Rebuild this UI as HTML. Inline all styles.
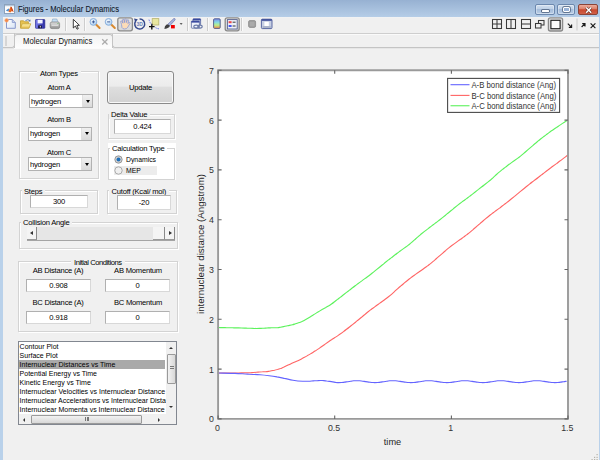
<!DOCTYPE html>
<html><head><meta charset="utf-8">
<style>
*{margin:0;padding:0;box-sizing:border-box}
html,body{width:600px;height:460px;overflow:hidden;background:#f0f0f0;font-family:"Liberation Sans",sans-serif;color:#000}
.a{position:absolute}
.t{position:absolute;white-space:nowrap;line-height:1}
#title{left:0;top:0;width:600px;height:17px;background:linear-gradient(#97b1d2,#b5cde7)}
#lb{left:0;top:17px;width:3px;height:443px;background:#b9d1ea}
#rb{left:599px;top:17px;width:1px;height:443px;background:#b9d1ea}
#tbar{left:3px;top:17px;width:596px;height:16px;background:#f0f0f0;border-top:1px solid #f1f2f3}
#tline{left:3px;top:33px;width:596px;height:1px;background:#cecece}
.sep{position:absolute;top:18px;width:1px;height:13px;background:#cdcdcd;box-shadow:1px 0 0 #fafafa}
.pnl{position:absolute;border:1px solid #d3d3d3;box-shadow:inset 1px 1px 0 #fff,1px 1px 0 #fff}
.ptl{position:absolute;background:#f0f0f0;padding:0 2.5px;font-size:7.6px;letter-spacing:-0.22px;line-height:8px;white-space:nowrap}
.lbl{position:absolute;font-size:7.6px;letter-spacing:-0.22px;line-height:8px;white-space:nowrap;text-align:center}
.edit{position:absolute;background:#fff;border:1px solid #b0b0b0;border-right-color:#d8d8d8;border-bottom-color:#d8d8d8;font-size:7.6px;letter-spacing:-0.15px;text-align:center;display:flex;align-items:center;justify-content:center}
.pop{position:absolute;background:#fff;border:1px solid #b2b2b2;font-size:7.6px;letter-spacing:-0.22px;padding-left:1px;display:flex;align-items:center}
.pop .btn{position:absolute;right:0;top:0;width:10px;height:100%;background:linear-gradient(#f0f0f0,#dadada);border-left:1px solid #e0e0e0}
.pop .btn:after{content:"";position:absolute;left:2.5px;top:4.5px;border-left:2.5px solid transparent;border-right:2.5px solid transparent;border-top:3px solid #000}
.li{position:absolute;left:0;height:9px;font-size:7px;line-height:9px;white-space:nowrap;padding-left:0.6px;width:147px;overflow:hidden}
</style></head><body>
<div class="a" id="title"></div>
<div class="a" id="lb"></div>
<div class="a" id="rb"></div>
<div class="a" id="tbar"></div>
<div class="a" id="tline"></div>

<!-- title -->
<svg class="a" style="left:4px;top:4px" width="11" height="10">
<rect x="0.5" y="0.5" width="10" height="9" fill="#fdfdfd" stroke="#8ca2bc"/>
<rect x="1" y="1" width="9" height="1.2" fill="#b4c6da"/>
<path d="M1.8,6.6 L4.6,4.6 L5.6,5.6 L4.2,7.6 Z" fill="#4a8ed0"/>
<path d="M4.4,7.6 L6.6,2.8 Q7.4,2.4 7.8,3.4 L9.6,7.8 L8,7 L6.2,8.6 Z" fill="#e86a22"/>
<path d="M6.6,2.8 Q7.4,2.4 7.8,3.4 L9.6,7.8 L8,7 Z" fill="#c8401a"/>
</svg>
<div class="t" style="left:17.5px;top:4.9px;font-size:8.8px;color:#101828;transform:scaleX(0.868);transform-origin:0 0;-webkit-text-stroke:0.08px #101828">Figures - Molecular Dynamics</div>
<!-- window buttons -->
<div class="a" style="left:535px;top:4px;width:20px;height:11px;border:1px solid #6c88ae;border-radius:2px;background:linear-gradient(#d2e0f0 0%,#bed0e6 45%,#a6bedc 50%,#b8cce4 100%);box-shadow:inset 0 0 0 1px rgba(255,255,255,.35)"><div class="a" style="left:5.5px;top:4.6px;width:7px;height:2.4px;background:#fff;border-radius:0.5px;box-shadow:0 0 0 0.8px #4a5c78"></div></div>
<div class="a" style="left:557px;top:4px;width:18px;height:11px;border:1px solid #6c88ae;border-radius:2px;background:linear-gradient(#d2e0f0 0%,#bed0e6 45%,#a6bedc 50%,#b8cce4 100%);box-shadow:inset 0 0 0 1px rgba(255,255,255,.35)"><div class="a" style="left:5.3px;top:1.6px;width:6.6px;height:5.2px;border:1.4px solid #fff;border-radius:1px;background:#9ab4d8;box-shadow:0 0 0 0.7px #4a5c78"></div></div>
<div class="a" style="left:578px;top:4px;width:20px;height:11px;border:1px solid #8a4438;border-radius:2px;background:linear-gradient(#ecac9c 0%,#dc7e68 45%,#c8482e 52%,#d06048 100%)"><svg class="a" style="left:5px;top:0.5px" width="10" height="9"><path d="M2.2,1.6 L7.2,6.8 M7.2,1.6 L2.2,6.8" stroke="#5a2a22" stroke-width="2.6"/><path d="M2.2,1.6 L7.2,6.8 M7.2,1.6 L2.2,6.8" stroke="#fff" stroke-width="1.5"/></svg></div>

<!-- toolbar icons -->
<svg class="a" style="left:0;top:0" width="600" height="34">
<defs>
<linearGradient id="pg" x1="0" y1="0" x2="1" y2="1"><stop offset="0" stop-color="#ffffff"/><stop offset="1" stop-color="#d8e4f6"/></linearGradient>
<linearGradient id="fg" x1="0" y1="0" x2="0" y2="1"><stop offset="0" stop-color="#fff2b0"/><stop offset="1" stop-color="#e8c050"/></linearGradient>
<linearGradient id="sg" x1="0" y1="0" x2="1" y2="0"><stop offset="0" stop-color="#7a7ef0"/><stop offset="1" stop-color="#2a2aa0"/></linearGradient>
<radialGradient id="lg" cx=".4" cy=".4" r=".6"><stop offset="0" stop-color="#ffffff"/><stop offset="1" stop-color="#a8d0f4"/></radialGradient>
<linearGradient id="cb" x1="0" y1="0" x2="0" y2="1"><stop offset="0" stop-color="#8088e8"/><stop offset=".35" stop-color="#80d8e8"/><stop offset=".65" stop-color="#b8f088"/><stop offset="1" stop-color="#f08850"/></linearGradient>
<linearGradient id="btg" x1="0" y1="0" x2="0" y2="1"><stop offset="0" stop-color="#e4e4e4"/><stop offset="1" stop-color="#d8d8d8"/></linearGradient>
</defs>
<!-- new -->
<path d="M6.5,19.5 H12.3 L15.3,22.5 V28.3 H6.5 Z" fill="url(#pg)" stroke="#8898cc" stroke-width="1"/>
<path d="M12.3,19.5 V22.5 H15.3" fill="#c4d0ee" stroke="#8898cc" stroke-width="0.8"/>
<circle cx="6.6" cy="20.4" r="1.8" fill="#f28848" stroke="#f4b088" stroke-width="0.6"/>
<!-- open -->
<path d="M20.5,20.8 H23.6 L24.6,21.8 H28.4 V27.8 H20.5 Z" fill="#e6c250" stroke="#bf9a2e" stroke-width="0.8"/>
<path d="M20.6,28.2 L22.2,23.8 H30.8 L29,28.2 Z" fill="url(#fg)" stroke="#c8a436" stroke-width="0.8"/>
<path d="M25.5,21 Q27.5,18.6 29.8,20.6" fill="none" stroke="#6a8cc0" stroke-width="1.1"/>
<path d="M30.6,19.6 L30.2,21.8 L28.4,21" fill="#4a6ca8"/>
<!-- save -->
<rect x="35.5" y="19.5" width="9.3" height="8.8" rx="0.6" fill="url(#sg)" stroke="#2c2c90" stroke-width="0.7"/>
<rect x="37.6" y="19.8" width="5" height="3.6" fill="#f4f4ff"/>
<rect x="38.2" y="25.4" width="3.6" height="2.8" fill="#101030"/>
<rect x="39.8" y="25.9" width="1" height="1.6" fill="#e0e0e0"/>
<!-- print -->
<defs><linearGradient id="prg" x1="0" y1="0" x2="0" y2="1"><stop offset="0" stop-color="#e0e0e0"/><stop offset="1" stop-color="#8e8e8e"/></linearGradient></defs>
<path d="M51.8,22.6 L52.6,19 H56.8 L58.2,22.6 Z" fill="#c4def4" stroke="#8aa2bc" stroke-width="0.6"/>
<path d="M50.2,23.6 Q50.2,22 52,22 H57.8 Q59.6,22 59.6,23.6 V27 Q59.6,28.6 57.8,28.6 H52 Q50.2,28.6 50.2,27 Z" fill="url(#prg)" stroke="#7e7e7e" stroke-width="0.7"/>
<path d="M51.6,25.2 H58.2" stroke="#f2f2f2" stroke-width="0.9"/>
<circle cx="58" cy="23.6" r="0.5" fill="#4a4"/>
<!-- pointer -->
<path d="M73.3,19.3 V28 L75.4,26 L77,29.2 L78.3,28.6 L76.8,25.4 L79.4,25.3 Z" fill="#fff" stroke="#1a1a1a" stroke-width="0.85"/>
<!-- zoom in -->
<path d="M95.8,24.2 L99.6,28" stroke="#d88a30" stroke-width="2" stroke-linecap="round"/>
<circle cx="93.4" cy="21.9" r="3.4" fill="url(#lg)" stroke="#8cb0dc" stroke-width="1"/>
<path d="M91.9,21.9 H94.9 M93.4,20.4 V23.4" stroke="#2a4a90" stroke-width="0.9"/>
<!-- zoom out -->
<path d="M111,24.2 L114.8,28" stroke="#d88a30" stroke-width="2" stroke-linecap="round"/>
<circle cx="108.6" cy="21.9" r="3.4" fill="url(#lg)" stroke="#8cb0dc" stroke-width="1"/>
<path d="M107.1,21.9 H110.1" stroke="#2a4a90" stroke-width="0.9"/>
<!-- pan pressed -->
<rect x="117.8" y="17.8" width="14.6" height="13" rx="2" fill="url(#btg)" stroke="#8a8a8a" stroke-width="1.3"/>
<path d="M121.5,24.5 L120.6,21.6 Q120.8,20.6 121.8,21 L123,23.2 L122.4,19.8 Q122.8,18.9 123.8,19.4 L124.6,22.6 L124.8,19.2 Q125.4,18.5 126.2,19.2 L126.3,22.6 L127.4,19.8 Q128.2,19.3 128.7,20.2 L127.8,23.6 L129.2,22.4 Q130.2,22.4 130,23.4 L127.8,27.2 Q126.6,29 124.6,29 Q122.8,29 122,27.6 Z" fill="#fcdcb8" stroke="#7c90d8" stroke-width="0.7"/>
<!-- rotate -->
<path d="M135.6,21.2 A5,5 0 1 0 139.6,19" fill="none" stroke="#34488c" stroke-width="1.5"/>
<path d="M134,18.6 L137.8,19.2 L135.4,22.4 Z" fill="#34488c"/>
<text x="139.6" y="26.2" font-family="Liberation Sans" font-size="5" font-weight="bold" fill="#6a80b8" text-anchor="middle">3D</text>
<!-- data cursor -->
<rect x="152.2" y="18.6" width="6.6" height="6.4" fill="#e8e6a0" stroke="#b8b470" stroke-width="0.8"/>
<path d="M149,26.6 H154.6 M151.8,23.8 V29.4" stroke="#111" stroke-width="1.4"/>
<path d="M149,19.6 Q150,23 151.5,24.5 M155.5,27.6 Q157,28.6 159,28.8" fill="none" stroke="#5060e8" stroke-width="0.9" stroke-dasharray="1.4,0.9"/>
<!-- brush -->
<path d="M167.6,24.4 L173.8,18.6 Q175.4,18.2 175.2,19.8 L169.4,26.2 Z" fill="#a8b4dc" stroke="#5a6aa8" stroke-width="0.6"/>
<path d="M164.4,29 Q164.4,25.8 166.6,24.6 Q168.6,24 169.8,25.8 Q169.4,28.4 164.4,29 Z" fill="#404040"/>
<rect x="171" y="25" width="3.8" height="3.4" fill="#f00000"/>
<path d="M179.6,23.2 h3 l-1.5,1.6 z" fill="#333"/>
<!-- link -->
<rect x="193" y="18.8" width="7.6" height="6" rx="0.6" fill="#dce4f2" stroke="#4a5a9a" stroke-width="0.8"/>
<rect x="193" y="18.8" width="7.6" height="1.6" fill="#3a4aa0"/>
<rect x="191.4" y="21" width="8" height="7.2" rx="0.6" fill="#eef2fa" stroke="#5a6aa0" stroke-width="0.8"/>
<rect x="191.4" y="21" width="8" height="1.6" fill="#3a4aa0"/>
<ellipse cx="196.2" cy="26.6" rx="2.4" ry="1.5" fill="none" stroke="#6a7aa8" stroke-width="1.1"/>
<ellipse cx="200" cy="26.6" rx="2.2" ry="1.5" fill="none" stroke="#6a7aa8" stroke-width="1.1"/>
<!-- colorbar -->
<rect x="213.6" y="18.8" width="6.6" height="9.6" rx="1" fill="url(#cb)" stroke="#4a5688" stroke-width="0.9"/>
<!-- legend pressed -->
<rect x="225.2" y="17.8" width="14" height="13" rx="2" fill="url(#btg)" stroke="#8a8a8a" stroke-width="1.3"/>
<rect x="227.4" y="19.6" width="9.8" height="9.4" fill="#eef0f8" stroke="#56628e" stroke-width="0.9"/>
<rect x="228.6" y="21.2" width="3" height="2" fill="#ee4444"/>
<rect x="228.6" y="25" width="3" height="2" fill="#4455ee"/>
<path d="M232.6,22.2 h3 M232.6,26 h3" stroke="#222" stroke-width="0.9"/>
<!-- gray square -->
<rect x="248.6" y="20.6" width="7" height="6.8" rx="1.4" fill="#a2a2a2" stroke="#8a8a8a" stroke-width="0.8"/>
<rect x="250" y="22" width="4.2" height="4" fill="#ababab"/>
<!-- window -->
<rect x="261.4" y="19.2" width="10.6" height="9.4" rx="1" fill="#c8d0e4" stroke="#4a5a98" stroke-width="0.9"/>
<rect x="261.6" y="19.2" width="10.2" height="1.6" fill="#3a4a98"/>
<rect x="264.4" y="21.8" width="4.4" height="4.2" fill="#fff"/>
<rect x="262.6" y="26.4" width="8.2" height="1.2" fill="#9aa4bc"/>
<!-- right: grid icons -->
<g fill="none" stroke="#3a3a3a" stroke-width="1.05">
<rect x="492.5" y="19.5" width="9" height="9"/><path d="M497,19.5 V28.5 M492.5,24 H501.5"/>
<rect x="506.5" y="19.5" width="9" height="9"/><path d="M511,19.5 V28.5"/>
<rect x="521.5" y="19.5" width="9" height="9"/><path d="M521.5,24 H530.5"/>
<rect x="538.5" y="20.5" width="5.5" height="4.5"/><rect x="535.5" y="23.5" width="5.5" height="4.5" fill="#f0f0f0"/>
</g>
<rect x="548.4" y="17.8" width="14.2" height="13.2" rx="2" fill="url(#btg)" stroke="#8a8a8a" stroke-width="1.3"/>
<rect x="550.9" y="20.3" width="9.2" height="8.4" fill="#fafafa" stroke="#1a1a1a" stroke-width="1.1"/>
<path d="M567.8,23.6 L571.4,27.2 M571.6,24.6 V27.4 H568.8" fill="none" stroke="#1a1a1a" stroke-width="1.15"/>
<rect x="576.5" y="18.5" width="1" height="12" fill="#cacaca"/>
<path d="M585,23.6 L581.6,27 M582.2,23.6 H585 V26.4" fill="none" stroke="#1a1a1a" stroke-width="1.15"/>
<path d="M590.6,23.4 L595.4,28.2 M595.4,23.4 L590.6,28.2" stroke="#1a1a1a" stroke-width="1.15"/>
</svg>
<div class="sep" style="left:65px"></div>
<div class="sep" style="left:84px"></div>
<div class="sep" style="left:187px"></div>
<div class="sep" style="left:207px"></div>
<div class="sep" style="left:241px"></div>

<!-- tab strip -->
<div class="a" style="left:3px;top:34px;width:596px;height:1px;background:#fafafa"></div>
<div class="a" style="left:3px;top:33px;width:12px;height:15px;border-right:1px solid #c4c4c4;border-bottom:1px solid #c4c4c4;border-bottom-right-radius:3px"></div>
<div class="a" style="left:5px;top:36px;width:2px;height:10px;background:#d6d6d6"></div>
<div class="a" style="left:14px;top:34px;width:99px;height:14px;border:1px solid #c4c4c4;border-bottom:none;border-radius:3px 3px 0 0;background:linear-gradient(#f3f3f3,#fdfdfd)"></div>
<div class="a" style="left:112px;top:34px;width:487px;height:14px;border-left:1px solid #c4c4c4;border-bottom:1px solid #c4c4c4;border-bottom-left-radius:3px"></div>
<div class="a" style="left:3px;top:48px;width:596px;height:1px;background:#e6e6e6"></div>
<div class="a" style="left:14px;top:48px;width:99px;height:1px;background:#fbfbfb"></div>
<div class="t" style="left:22.7px;top:37.8px;font-size:8.2px;color:#141414;transform:scaleX(0.94);transform-origin:0 0">Molecular Dynamics</div>
<svg class="a" style="left:101px;top:37.5px" width="8" height="8"><path d="M1.2,1.2 L6.5,6.5 M6.5,1.2 L1.2,6.5" stroke="#acacac" stroke-width="1.25"/></svg>

<!-- PANELS -->
<!-- Atom types -->
<div class="pnl" style="left:19px;top:71px;width:80px;height:108px"></div>
<div class="ptl" style="left:37px;top:69.5px;padding:0 3px">Atom Types</div>
<div class="lbl" style="left:19px;top:84px;width:80px">Atom A</div>
<div class="pop" style="left:29px;top:94px;width:64px;height:14px">hydrogen<div class="btn"></div></div>
<div class="lbl" style="left:19px;top:116px;width:80px">Atom B</div>
<div class="pop" style="left:28px;top:126.5px;width:64px;height:14px">hydrogen<div class="btn"></div></div>
<div class="lbl" style="left:19px;top:148.5px;width:80px">Atom C</div>
<div class="pop" style="left:28px;top:157px;width:64px;height:14px">hydrogen<div class="btn"></div></div>

<!-- Update -->
<div class="a" style="left:107px;top:71px;width:67px;height:33px;border:1px solid #8a8a8a;border-radius:3px;background:linear-gradient(#f3f3f3 0%,#ececec 45%,#dedede 50%,#d2d2d2 100%);box-shadow:inset 0 0 0 1px #f8f8f8"></div>
<div class="lbl" style="left:107px;top:84px;width:67px">Update</div>

<!-- Delta -->
<div class="pnl" style="left:108px;top:114px;width:67px;height:25px"></div>
<div class="ptl" style="left:108.5px;top:111px">Delta Value</div>
<div class="edit" style="left:114px;top:119px;width:57px;height:15px">0.424</div>

<!-- Calc type -->
<div class="a" style="left:108px;top:143px;width:68px;height:37px;background:#fff"></div>
<div class="a" style="left:108px;top:148px;width:67px;height:32px;border:1px solid #d3d3d3"></div>
<div class="ptl" style="left:109.5px;top:144.6px;background:#fff">Calculation Type</div>
<svg class="a" style="left:114px;top:155px" width="10" height="10"><defs><radialGradient id="rg" cx=".5" cy=".5" r=".5"><stop offset="0" stop-color="#e8e8e8"/><stop offset="1" stop-color="#c8c8c8"/></radialGradient></defs><circle cx="4.5" cy="4.5" r="3.7" fill="url(#rg)" stroke="#8a8a8a" stroke-width="0.8"/><circle cx="4.5" cy="4.5" r="2" fill="#1f6fb8"/></svg>
<div class="t" style="left:126px;top:157px;font-size:6.85px">Dynamics</div>
<div class="a" style="left:114px;top:166px;width:43px;height:9px;background:#ececec"></div>
<svg class="a" style="left:114px;top:166px" width="10" height="10"><circle cx="4.5" cy="4.5" r="3.7" fill="#f0f0f0" stroke="#9a9a9a" stroke-width="0.8"/></svg>
<div class="t" style="left:126px;top:168.2px;font-size:6.85px">MEP</div>

<!-- Steps -->
<div class="pnl" style="left:20px;top:190px;width:78px;height:24px"></div>
<div class="ptl" style="left:21.5px;top:187.5px">Steps</div>
<div class="edit" style="left:30px;top:195px;width:58px;height:13px">300</div>

<!-- Cutoff -->
<div class="pnl" style="left:107px;top:190px;width:70px;height:24px"></div>
<div class="ptl" style="left:109px;top:187.5px">Cutoff (Kcal/ mol)</div>
<div class="edit" style="left:117px;top:195px;width:54px;height:15px">-20</div>

<!-- Collision angle -->
<div class="pnl" style="left:19px;top:222px;width:159px;height:27px"></div>
<div class="ptl" style="left:20.5px;top:219px">Collision Angle</div>
<div class="a" style="left:27px;top:227px;width:148px;height:14px;background:#e6e6e6;border-bottom:1px solid #a4a4a4"></div>
<div class="a" style="left:27px;top:227px;width:10px;height:13px;background:#f4f4f4;border-right:1px solid #8a8a8a;border-bottom:1px solid #9a9a9a"></div>
<div class="a" style="left:30px;top:231px;border-top:2px solid transparent;border-bottom:2px solid transparent;border-right:3px solid #333"></div>
<div class="a" style="left:153px;top:227px;width:12px;height:13px;background:#f4f4f4;border-right:1px solid #8a8a8a;border-bottom:1px solid #9a9a9a"></div>
<div class="a" style="left:165px;top:227px;width:10px;height:13px;background:#f4f4f4;border-right:1px solid #8a8a8a;border-bottom:1px solid #9a9a9a"></div>
<div class="a" style="left:169px;top:231px;border-top:2px solid transparent;border-bottom:2px solid transparent;border-left:3px solid #333"></div>

<!-- Initial conditions -->
<div class="pnl" style="left:18px;top:261px;width:160px;height:71px"></div>
<div class="ptl" style="left:71px;top:258.6px;padding:0 3px;letter-spacing:-0.45px">Initial Conditions</div>
<div class="lbl" style="left:18px;top:267px;width:80px">AB Distance (A)</div>
<div class="lbl" style="left:98px;top:267px;width:80px">AB Momentum</div>
<div class="edit" style="left:26px;top:279px;width:65px;height:13px">0.908</div>
<div class="edit" style="left:105px;top:279px;width:65px;height:13px">0</div>
<div class="lbl" style="left:18px;top:299px;width:80px">BC Distance (A)</div>
<div class="lbl" style="left:98px;top:299px;width:80px">BC Momentum</div>
<div class="edit" style="left:26px;top:311px;width:65px;height:13px">0.918</div>
<div class="edit" style="left:105px;top:311px;width:65px;height:13px">0</div>

<!-- listbox -->
<div class="a" style="left:18px;top:341px;width:159px;height:84px;background:#fff;border:1px solid #828790;overflow:hidden">
<div class="li" style="top:0px">Contour Plot</div>
<div class="li" style="top:9px">Surface Plot</div>
<div class="li" style="top:18px;background:#a9a9a9;width:146px">Internuclear Distances vs Time</div>
<div class="li" style="top:27px">Potential Energy vs Time</div>
<div class="li" style="top:36px">Kinetic Energy vs Time</div>
<div class="li" style="top:45px">Internuclear Velocities vs Internuclear Distance</div>
<div class="li" style="top:54px">Internuclear Accelerations vs Internuclear Distance</div>
<div class="li" style="top:63px">Internuclear Momenta vs Internuclear Distance</div>
<!-- vscroll -->
<div class="a" style="left:147px;top:0;width:10px;height:72px;background:#f0f0f0"></div>
<div class="a" style="left:148px;top:12px;width:9px;height:30px;border:1px solid #9a9a9a;border-radius:1px;background:linear-gradient(90deg,#f2f2f2,#d8d8d8)"></div>
<div class="a" style="left:150.5px;top:24px;width:4px;height:3px;border-top:1px solid #777;border-bottom:1px solid #777"></div><div class="a" style="left:150.5px;top:25.5px;width:4px;height:1px;background:#777"></div>
<div class="a" style="left:150px;top:5px;border-left:2px solid transparent;border-right:2px solid transparent;border-bottom:2.5px solid #333"></div>
<div class="a" style="left:150px;top:64px;border-left:2px solid transparent;border-right:2px solid transparent;border-top:2.5px solid #333"></div>
<!-- hscroll -->
<div class="a" style="left:0;top:72px;width:157px;height:11px;background:#f0f0f0"></div>
<div class="a" style="left:12px;top:73px;width:111px;height:9px;border:1px solid #9a9a9a;border-radius:1px;background:linear-gradient(#f2f2f2,#d8d8d8)"></div>
<div class="a" style="left:66px;top:75px;width:4px;height:4px;border-left:1px solid #777;border-right:1px solid #777"></div><div class="a" style="left:67.5px;top:75px;width:1px;height:4px;background:#777"></div>
<div class="a" style="left:4px;top:75.5px;border-top:2px solid transparent;border-bottom:2px solid transparent;border-right:2.5px solid #333"></div>
<div class="a" style="left:139px;top:75.5px;border-top:2px solid transparent;border-bottom:2px solid transparent;border-left:2.5px solid #333"></div>
</div>

<svg class="a" style="left:588px;top:450px" width="11" height="10"><g fill="#b4b2aa"><rect x="8.5" y="4" width="1.2" height="1.2"/><rect x="6" y="6.8" width="1.2" height="1.2"/><rect x="8.5" y="6.8" width="1.2" height="1.2"/><rect x="3.5" y="9" width="1.2" height="1"/><rect x="6" y="9" width="1.2" height="1"/><rect x="8.5" y="9" width="1.2" height="1"/></g></svg>
<svg class="a" style="left:0;top:0" width="600" height="460"><rect x="218.1" y="70.3" width="349.9" height="348.59999999999997" fill="#fff"/><path d="M217.5,327.5 C218.0,327.5 219.5,327.5 220.5,327.6 C221.5,327.6 222.5,327.6 223.5,327.6 C224.5,327.6 225.5,327.7 226.5,327.7 C227.5,327.7 228.5,327.7 229.5,327.7 C230.5,327.8 231.5,327.8 232.5,327.8 C233.5,327.8 234.5,327.9 235.5,327.9 C236.5,327.9 237.5,327.9 238.5,327.9 C239.5,328.0 240.5,328.0 241.5,328.0 C242.5,328.1 243.5,328.1 244.5,328.1 C245.5,328.1 246.5,328.2 247.5,328.2 C248.5,328.2 249.5,328.3 250.5,328.3 C251.5,328.3 252.5,328.3 253.5,328.4 C254.5,328.4 255.5,328.4 256.5,328.5 C257.5,328.5 258.5,328.5 259.5,328.4 C260.5,328.4 261.5,328.3 262.5,328.3 C263.5,328.2 264.5,328.2 265.5,328.1 C266.5,328.0 267.5,328.0 268.5,327.9 C269.5,327.9 270.5,327.8 271.5,327.8 C272.5,327.7 273.5,327.7 274.5,327.7 C275.5,327.7 276.5,327.8 277.5,327.7 C278.5,327.7 279.5,327.4 280.5,327.2 C281.5,327.0 282.5,326.8 283.5,326.6 C284.5,326.4 285.5,326.2 286.5,326.0 C287.5,325.8 288.5,325.7 289.5,325.4 C290.5,325.2 291.5,325.0 292.5,324.7 C293.5,324.5 294.5,324.1 295.5,323.8 C296.5,323.5 297.5,323.2 298.5,322.8 C299.5,322.5 300.5,322.1 301.5,321.7 C302.5,321.2 303.5,320.8 304.5,320.2 C305.5,319.7 306.5,319.1 307.5,318.5 C308.5,317.9 309.5,317.3 310.5,316.7 C311.5,316.1 312.5,315.4 313.5,314.8 C314.5,314.2 315.5,313.5 316.5,312.9 C317.5,312.3 318.5,311.7 319.5,311.1 C320.5,310.5 321.5,309.9 322.5,309.3 C323.5,308.8 324.5,308.2 325.5,307.7 C326.5,307.1 327.5,306.6 328.5,306.0 C329.5,305.4 330.5,304.7 331.5,304.0 C332.5,303.3 333.5,302.5 334.5,301.7 C335.5,301.0 336.5,300.2 337.5,299.4 C338.5,298.6 339.5,297.9 340.5,297.1 C341.5,296.3 342.5,295.6 343.5,294.8 C344.5,294.0 345.5,293.2 346.5,292.4 C347.5,291.7 348.5,290.9 349.5,290.1 C350.5,289.3 351.5,288.6 352.5,287.8 C353.5,287.1 354.5,286.3 355.5,285.5 C356.5,284.8 357.5,284.0 358.5,283.3 C359.5,282.5 360.5,281.8 361.5,281.1 C362.5,280.3 363.5,279.6 364.5,278.9 C365.5,278.2 366.5,277.5 367.5,276.7 C368.5,276.0 369.5,275.3 370.5,274.5 C371.5,273.7 372.5,272.9 373.5,272.1 C374.5,271.3 375.5,270.5 376.5,269.6 C377.5,268.8 378.5,268.0 379.5,267.2 C380.5,266.4 381.5,265.6 382.5,264.8 C383.5,264.0 384.5,263.1 385.5,262.3 C386.5,261.5 387.5,260.7 388.5,259.9 C389.5,259.1 390.5,258.4 391.5,257.6 C392.5,256.8 393.5,256.1 394.5,255.3 C395.5,254.6 396.5,253.8 397.5,253.0 C398.5,252.3 399.5,251.5 400.5,250.8 C401.5,250.0 402.5,249.3 403.5,248.6 C404.5,247.9 405.5,247.2 406.5,246.5 C407.5,245.7 408.5,245.0 409.5,244.2 C410.5,243.5 411.5,242.6 412.5,241.7 C413.5,240.9 414.5,239.9 415.5,239.0 C416.5,238.1 417.5,237.2 418.5,236.3 C419.5,235.5 420.5,234.6 421.5,233.8 C422.5,233.0 423.5,232.2 424.5,231.4 C425.5,230.6 426.5,229.8 427.5,229.1 C428.5,228.3 429.5,227.5 430.5,226.8 C431.5,226.0 432.5,225.3 433.5,224.5 C434.5,223.8 435.5,223.0 436.5,222.3 C437.5,221.5 438.5,220.8 439.5,220.0 C440.5,219.2 441.5,218.4 442.5,217.6 C443.5,216.8 444.5,216.0 445.5,215.2 C446.5,214.4 447.5,213.5 448.5,212.7 C449.5,211.9 450.5,211.1 451.5,210.3 C452.5,209.5 453.5,208.6 454.5,207.8 C455.5,207.0 456.5,206.2 457.5,205.4 C458.5,204.6 459.5,203.8 460.5,203.0 C461.5,202.3 462.5,201.5 463.5,200.8 C464.5,200.1 465.5,199.3 466.5,198.6 C467.5,197.9 468.5,197.1 469.5,196.4 C470.5,195.6 471.5,194.9 472.5,194.1 C473.5,193.3 474.5,192.5 475.5,191.7 C476.5,190.9 477.5,190.1 478.5,189.4 C479.5,188.6 480.5,187.8 481.5,187.0 C482.5,186.3 483.5,185.5 484.5,184.7 C485.5,184.0 486.5,183.2 487.5,182.4 C488.5,181.6 489.5,180.8 490.5,180.0 C491.5,179.1 492.5,178.2 493.5,177.3 C494.5,176.4 495.5,175.4 496.5,174.5 C497.5,173.6 498.5,172.7 499.5,171.9 C500.5,171.0 501.5,170.2 502.5,169.4 C503.5,168.6 504.5,167.9 505.5,167.1 C506.5,166.3 507.5,165.6 508.5,164.8 C509.5,164.1 510.5,163.4 511.5,162.6 C512.5,161.9 513.5,161.2 514.5,160.5 C515.5,159.8 516.5,159.1 517.5,158.4 C518.5,157.7 519.5,156.9 520.5,156.1 C521.5,155.3 522.5,154.5 523.5,153.6 C524.5,152.8 525.5,151.9 526.5,151.0 C527.5,150.2 528.5,149.3 529.5,148.4 C530.5,147.6 531.5,146.7 532.5,145.9 C533.5,145.0 534.5,144.1 535.5,143.3 C536.5,142.4 537.5,141.6 538.5,140.7 C539.5,139.9 540.5,139.1 541.5,138.3 C542.5,137.5 543.5,136.8 544.5,136.0 C545.5,135.2 546.5,134.5 547.5,133.7 C548.5,133.0 549.5,132.2 550.5,131.5 C551.5,130.8 552.5,130.2 553.5,129.5 C554.5,128.8 555.5,128.1 556.5,127.5 C557.5,126.8 558.5,126.1 559.5,125.4 C560.5,124.8 561.5,124.1 562.5,123.4 C563.5,122.8 564.6,122.1 565.5,121.5 C566.4,120.8 567.6,120.1 568.0,119.8" fill="none" stroke="#5cf25c" stroke-width="1.1"/><path d="M217.5,373.0 C218.0,373.0 219.5,373.0 220.5,373.0 C221.5,373.0 222.5,373.0 223.5,373.0 C224.5,373.0 225.5,373.0 226.5,373.0 C227.5,373.0 228.5,373.0 229.5,373.0 C230.5,373.0 231.5,373.0 232.5,373.0 C233.5,373.0 234.5,373.0 235.5,373.0 C236.5,373.0 237.5,373.0 238.5,373.0 C239.5,372.9 240.5,372.9 241.5,372.9 C242.5,372.9 243.5,372.8 244.5,372.8 C245.5,372.8 246.5,372.8 247.5,372.8 C248.5,372.7 249.5,372.7 250.5,372.7 C251.5,372.6 252.5,372.6 253.5,372.5 C254.5,372.4 255.5,372.3 256.5,372.2 C257.5,372.1 258.5,372.1 259.5,372.0 C260.5,371.9 261.5,371.8 262.5,371.8 C263.5,371.7 264.5,371.8 265.5,371.7 C266.5,371.7 267.5,371.6 268.5,371.4 C269.5,371.3 270.5,371.0 271.5,370.8 C272.5,370.6 273.5,370.4 274.5,370.2 C275.5,369.9 276.5,369.7 277.5,369.5 C278.5,369.2 279.5,368.9 280.5,368.6 C281.5,368.2 282.5,367.7 283.5,367.3 C284.5,366.8 285.5,366.3 286.5,365.8 C287.5,365.3 288.5,364.9 289.5,364.4 C290.5,363.9 291.5,363.5 292.5,363.0 C293.5,362.6 294.5,362.2 295.5,361.7 C296.5,361.3 297.5,360.9 298.5,360.4 C299.5,359.9 300.5,359.4 301.5,358.9 C302.5,358.4 303.5,357.8 304.5,357.3 C305.5,356.8 306.5,356.2 307.5,355.6 C308.5,355.1 309.5,354.5 310.5,353.9 C311.5,353.3 312.5,352.6 313.5,352.0 C314.5,351.4 315.5,350.7 316.5,350.1 C317.5,349.4 318.5,348.8 319.5,348.1 C320.5,347.4 321.5,346.7 322.5,346.0 C323.5,345.3 324.5,344.6 325.5,343.9 C326.5,343.2 327.5,342.5 328.5,341.8 C329.5,341.1 330.5,340.4 331.5,339.8 C332.5,339.1 333.5,338.5 334.5,337.8 C335.5,337.2 336.5,336.5 337.5,335.9 C338.5,335.2 339.5,334.5 340.5,333.8 C341.5,333.1 342.5,332.4 343.5,331.6 C344.5,330.9 345.5,330.1 346.5,329.3 C347.5,328.6 348.5,327.8 349.5,327.0 C350.5,326.2 351.5,325.4 352.5,324.6 C353.5,323.8 354.5,323.0 355.5,322.2 C356.5,321.4 357.5,320.5 358.5,319.7 C359.5,318.9 360.5,318.1 361.5,317.3 C362.5,316.4 363.5,315.6 364.5,314.8 C365.5,313.9 366.5,313.1 367.5,312.3 C368.5,311.5 369.5,310.7 370.5,309.9 C371.5,309.2 372.5,308.4 373.5,307.7 C374.5,307.0 375.5,306.2 376.5,305.5 C377.5,304.8 378.5,304.1 379.5,303.4 C380.5,302.6 381.5,301.9 382.5,301.2 C383.5,300.5 384.5,299.8 385.5,299.0 C386.5,298.3 387.5,297.6 388.5,296.8 C389.5,296.0 390.5,295.2 391.5,294.3 C392.5,293.4 393.5,292.5 394.5,291.6 C395.5,290.7 396.5,289.7 397.5,288.8 C398.5,287.9 399.5,287.0 400.5,286.2 C401.5,285.3 402.5,284.5 403.5,283.7 C404.5,282.9 405.5,282.0 406.5,281.2 C407.5,280.4 408.5,279.6 409.5,278.8 C410.5,278.0 411.5,277.3 412.5,276.5 C413.5,275.8 414.5,275.1 415.5,274.4 C416.5,273.7 417.5,273.0 418.5,272.3 C419.5,271.6 420.5,270.9 421.5,270.2 C422.5,269.5 423.5,268.8 424.5,268.0 C425.5,267.3 426.5,266.6 427.5,265.9 C428.5,265.1 429.5,264.4 430.5,263.6 C431.5,262.8 432.5,261.9 433.5,261.1 C434.5,260.2 435.5,259.4 436.5,258.5 C437.5,257.6 438.5,256.8 439.5,255.9 C440.5,255.0 441.5,254.2 442.5,253.3 C443.5,252.4 444.5,251.5 445.5,250.7 C446.5,249.8 447.5,248.9 448.5,248.1 C449.5,247.3 450.5,246.5 451.5,245.7 C452.5,245.0 453.5,244.3 454.5,243.6 C455.5,242.9 456.5,242.2 457.5,241.4 C458.5,240.7 459.5,240.0 460.5,239.3 C461.5,238.6 462.5,237.8 463.5,237.1 C464.5,236.4 465.5,235.6 466.5,234.9 C467.5,234.1 468.5,233.4 469.5,232.6 C470.5,231.8 471.5,230.9 472.5,230.1 C473.5,229.2 474.5,228.3 475.5,227.5 C476.5,226.6 477.5,225.7 478.5,224.8 C479.5,224.0 480.5,223.1 481.5,222.3 C482.5,221.4 483.5,220.6 484.5,219.7 C485.5,218.9 486.5,218.0 487.5,217.2 C488.5,216.4 489.5,215.6 490.5,214.8 C491.5,214.0 492.5,213.3 493.5,212.5 C494.5,211.8 495.5,211.0 496.5,210.3 C497.5,209.5 498.5,208.8 499.5,208.1 C500.5,207.3 501.5,206.6 502.5,205.8 C503.5,205.0 504.5,204.3 505.5,203.5 C506.5,202.7 507.5,202.0 508.5,201.2 C509.5,200.4 510.5,199.6 511.5,198.8 C512.5,198.0 513.5,197.2 514.5,196.4 C515.5,195.5 516.5,194.7 517.5,193.9 C518.5,193.1 519.5,192.2 520.5,191.4 C521.5,190.6 522.5,189.8 523.5,189.0 C524.5,188.2 525.5,187.3 526.5,186.5 C527.5,185.7 528.5,184.9 529.5,184.1 C530.5,183.4 531.5,182.6 532.5,181.8 C533.5,181.0 534.5,180.3 535.5,179.5 C536.5,178.8 537.5,178.0 538.5,177.2 C539.5,176.5 540.5,175.7 541.5,174.9 C542.5,174.1 543.5,173.4 544.5,172.6 C545.5,171.8 546.5,171.0 547.5,170.3 C548.5,169.5 549.5,168.7 550.5,168.0 C551.5,167.2 552.5,166.5 553.5,165.8 C554.5,165.0 555.5,164.3 556.5,163.6 C557.5,162.8 558.5,162.1 559.5,161.3 C560.5,160.6 561.5,159.9 562.5,159.1 C563.5,158.4 564.6,157.6 565.5,156.9 C566.4,156.2 567.6,155.3 568.0,155.0" fill="none" stroke="#ff6464" stroke-width="1.1"/><path d="M217.5,373.0 C220.4,373.1 230.0,373.2 235.0,373.4 C240.0,373.6 243.3,373.9 247.5,374.1 C251.7,374.3 256.4,374.5 260.0,374.8 C263.6,375.1 266.4,375.4 269.2,375.7 C272.0,376.0 274.5,376.4 277.0,376.9 C279.5,377.3 281.6,377.8 284.3,378.4 C287.0,378.9 289.9,379.7 293.0,380.2 C296.1,380.7 300.6,381.1 302.7,381.2 C304.8,381.4 304.7,381.3 305.7,381.3 C306.7,381.3 307.7,381.3 308.7,381.2 C309.7,381.2 310.7,381.1 311.7,381.0 C312.7,380.9 313.7,380.9 314.7,380.8 C315.7,380.7 316.7,380.6 317.7,380.6 C318.7,380.5 319.7,380.5 320.7,380.5 C321.7,380.5 322.7,380.6 323.7,380.6 C324.7,380.7 325.7,380.8 326.7,381.0 C327.7,381.1 328.7,381.3 329.7,381.4 C330.7,381.6 331.7,381.8 332.7,381.9 C333.7,382.1 334.7,382.2 335.7,382.4 C336.7,382.5 337.7,382.6 338.7,382.6 C339.7,382.6 340.7,382.6 341.7,382.5 C342.7,382.4 343.7,382.3 344.7,382.1 C345.7,382.0 346.7,381.8 347.7,381.7 C348.7,381.5 349.7,381.3 350.7,381.2 C351.7,381.1 352.7,380.9 353.7,380.8 C354.7,380.8 355.7,380.7 356.7,380.7 C357.7,380.7 358.7,380.7 359.7,380.8 C360.7,380.9 361.7,381.0 362.7,381.2 C363.7,381.3 364.7,381.5 365.7,381.6 C366.7,381.8 367.7,382.0 368.7,382.1 C369.7,382.2 370.7,382.4 371.7,382.5 C372.7,382.5 373.7,382.6 374.7,382.6 C375.7,382.6 376.7,382.6 377.7,382.5 C378.7,382.4 379.7,382.3 380.7,382.1 C381.7,382.0 382.7,381.8 383.7,381.7 C384.7,381.5 385.7,381.3 386.7,381.2 C387.7,381.1 388.7,380.9 389.7,380.8 C390.7,380.8 391.7,380.7 392.7,380.7 C393.7,380.7 394.7,380.7 395.7,380.8 C396.7,380.9 397.7,381.0 398.7,381.2 C399.7,381.3 400.7,381.5 401.7,381.6 C402.7,381.8 403.7,382.0 404.7,382.1 C405.7,382.2 406.7,382.4 407.7,382.5 C408.7,382.5 409.7,382.6 410.7,382.6 C411.7,382.6 412.7,382.6 413.7,382.5 C414.7,382.4 415.7,382.3 416.7,382.1 C417.7,382.0 418.7,381.8 419.7,381.7 C420.7,381.5 421.7,381.3 422.7,381.2 C423.7,381.1 424.7,380.9 425.7,380.8 C426.7,380.8 427.7,380.7 428.7,380.7 C429.7,380.7 430.7,380.7 431.7,380.8 C432.7,380.9 433.7,381.0 434.7,381.2 C435.7,381.3 436.7,381.5 437.7,381.6 C438.7,381.8 439.7,382.0 440.7,382.1 C441.7,382.2 442.7,382.4 443.7,382.5 C444.7,382.5 445.7,382.6 446.7,382.6 C447.7,382.6 448.7,382.6 449.7,382.5 C450.7,382.4 451.7,382.3 452.7,382.1 C453.7,382.0 454.7,381.8 455.7,381.7 C456.7,381.5 457.7,381.3 458.7,381.2 C459.7,381.1 460.7,380.9 461.7,380.8 C462.7,380.8 463.7,380.7 464.7,380.7 C465.7,380.7 466.7,380.7 467.7,380.8 C468.7,380.9 469.7,381.0 470.7,381.2 C471.7,381.3 472.7,381.5 473.7,381.6 C474.7,381.8 475.7,382.0 476.7,382.1 C477.7,382.2 478.7,382.4 479.7,382.5 C480.7,382.5 481.7,382.6 482.7,382.6 C483.7,382.6 484.7,382.6 485.7,382.5 C486.7,382.4 487.7,382.3 488.7,382.1 C489.7,382.0 490.7,381.8 491.7,381.7 C492.7,381.5 493.7,381.3 494.7,381.2 C495.7,381.1 496.7,380.9 497.7,380.8 C498.7,380.8 499.7,380.7 500.7,380.7 C501.7,380.7 502.7,380.7 503.7,380.8 C504.7,380.9 505.7,381.0 506.7,381.2 C507.7,381.3 508.7,381.5 509.7,381.6 C510.7,381.8 511.7,382.0 512.7,382.1 C513.7,382.2 514.7,382.4 515.7,382.5 C516.7,382.5 517.7,382.6 518.7,382.6 C519.7,382.6 520.7,382.6 521.7,382.5 C522.7,382.4 523.7,382.3 524.7,382.1 C525.7,382.0 526.7,381.8 527.7,381.7 C528.7,381.5 529.7,381.3 530.7,381.2 C531.7,381.1 532.7,380.9 533.7,380.8 C534.7,380.8 535.7,380.7 536.7,380.7 C537.7,380.7 538.7,380.7 539.7,380.8 C540.7,380.9 541.7,381.0 542.7,381.2 C543.7,381.3 544.7,381.5 545.7,381.6 C546.7,381.8 547.7,382.0 548.7,382.1 C549.7,382.2 550.7,382.4 551.7,382.5 C552.7,382.5 553.7,382.6 554.7,382.6 C555.7,382.6 556.7,382.6 557.7,382.5 C558.7,382.4 559.7,382.3 560.7,382.1 C561.7,382.0 562.7,381.8 563.7,381.7 C564.7,381.5 566.2,381.3 566.7,381.2" fill="none" stroke="#6464ff" stroke-width="1.1"/><path d="M218.1,70.3 H568.0 V418.9 H218.1 Z" fill="none" stroke="#9a9a9a" stroke-width="1.9"/><path d="M218.1,418.9 h3.5 M568.0,418.9 h-3.5 M218.1,369.1 h3.5 M568.0,369.1 h-3.5 M218.1,319.3 h3.5 M568.0,319.3 h-3.5 M218.1,269.5 h3.5 M568.0,269.5 h-3.5 M218.1,219.7 h3.5 M568.0,219.7 h-3.5 M218.1,169.9 h3.5 M568.0,169.9 h-3.5 M218.1,120.1 h3.5 M568.0,120.1 h-3.5 M218.1,70.3 h3.5 M568.0,70.3 h-3.5 M218.1,418.9 v-3.5 M218.1,70.3 v3.5 M334.7,418.9 v-3.5 M334.7,70.3 v3.5 M451.4,418.9 v-3.5 M451.4,70.3 v3.5 M568.0,418.9 v-3.5 M568.0,70.3 v3.5 " stroke="#666" stroke-width="1.1"/><g font-family="Liberation Sans" font-size="8.8" fill="#333"><text x="214" y="422.3" text-anchor="end">0</text><text x="214" y="372.5" text-anchor="end">1</text><text x="214" y="322.7" text-anchor="end">2</text><text x="214" y="272.9" text-anchor="end">3</text><text x="214" y="223.1" text-anchor="end">4</text><text x="214" y="173.3" text-anchor="end">5</text><text x="214" y="123.5" text-anchor="end">6</text><text x="214" y="73.7" text-anchor="end">7</text><text x="217.4" y="431" text-anchor="middle">0</text><text x="334.0" y="431" text-anchor="middle">0.5</text><text x="450.7" y="431" text-anchor="middle">1</text><text x="567.3" y="431" text-anchor="middle">1.5</text></g><text x="392.5" y="444.5" text-anchor="middle" font-family="Liberation Sans" font-size="9.2" fill="#262626">time</text><text transform="translate(203.6,244) rotate(-90)" text-anchor="middle" font-family="Liberation Sans" font-size="9.7" fill="#262626">internuclear distance (Angstrom)</text><rect x="447.6" y="78.4" width="112" height="34" fill="#fff" stroke="#4a4a4a" stroke-width="1.1"/><path d="M450.5,84.7 H469.5" stroke="#6464ff" stroke-width="1.1"/><text x="471.4" y="87.8" font-family="Liberation Sans" font-size="8.2" fill="#333" textLength="84.6" lengthAdjust="spacingAndGlyphs">A-B bond distance (Ang)</text><path d="M450.5,95.4 H469.5" stroke="#ff6464" stroke-width="1.1"/><text x="471.4" y="98.5" font-family="Liberation Sans" font-size="8.2" fill="#333" textLength="84.9" lengthAdjust="spacingAndGlyphs">B-C bond distance (Ang)</text><path d="M450.5,105.75 H469.5" stroke="#5cf25c" stroke-width="1.1"/><text x="471.4" y="108.8" font-family="Liberation Sans" font-size="8.2" fill="#333" textLength="84.9" lengthAdjust="spacingAndGlyphs">A-C bond distance (Ang)</text></svg>
</body></html>
